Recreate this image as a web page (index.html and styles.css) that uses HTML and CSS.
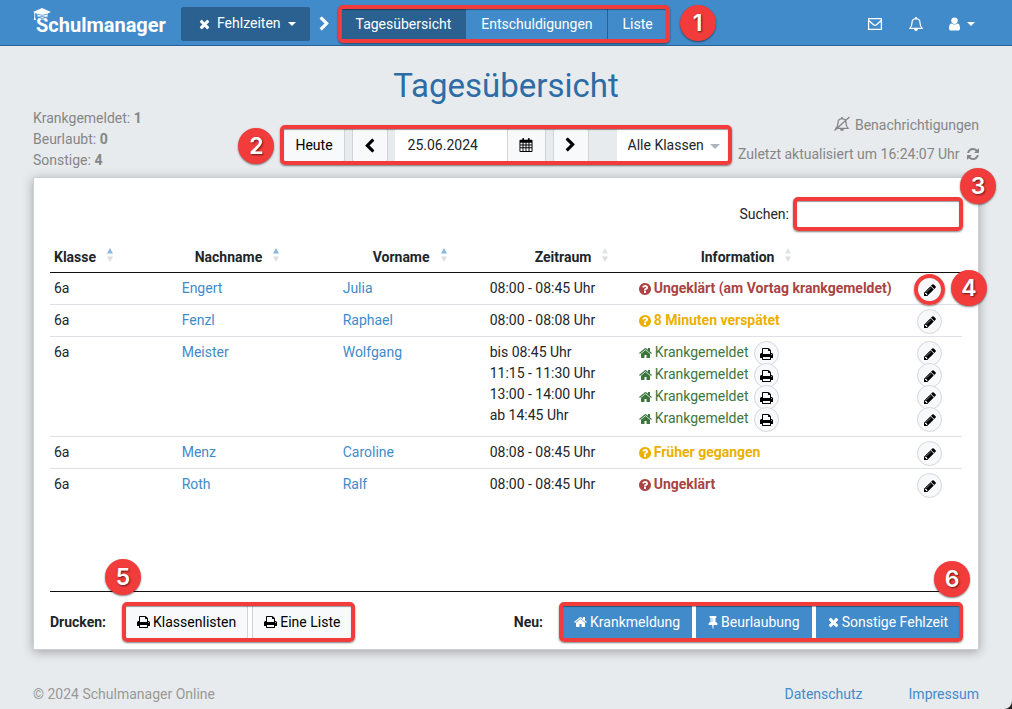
FILE: index.html
```html
<!DOCTYPE html>
<html lang="de">
<head>
<meta charset="utf-8">
<title>Tagesübersicht – Schulmanager</title>
<link rel="stylesheet" href="styles.css">
</head>
<body>
<svg class="sprite" aria-hidden="true">
  <symbol id="times" viewBox="192 0 1408 1792"><path d="M1490 1322q0 40-28 68l-136 136q-28 28-68 28t-68-28l-294-294-294 294q-28 28-68 28t-68-28l-136-136q-28-28-28-68t28-68l294-294-294-294q-28-28-28-68t28-68l136-136q28-28 68-28t68 28l294 294 294-294q28-28 68-28t68 28l136 136q28 28 28 68t-28 68l-294 294 294 294q28 28 28 68z"/></symbol>
  <symbol id="home" viewBox="64 0 1664 1792"><path d="M1472 992v480q0 26-19 45t-45 19h-384v-384h-256v384h-384q-26 0-45-19t-19-45v-480q0-1 .5-3t.5-3l575-474 575 474q1 2 1 6zm223-69l-62 74q-8 9-21 11h-3q-13 0-21-7l-692-577-692 577q-12 8-24 7-13-2-21-11l-62-74q-8-10-7-23.500t11-21.500l719-599q32-26 76-26t76 26l244 204v-195q0-14 9-23t23-9h192q14 0 23 9t9 23v408l219 182q10 8 11 21.500t-7 23.500z"/></symbol>
  <symbol id="question" viewBox="128 0 1536 1792"><path d="M1024 1376v-192q0-14-9-23t-23-9h-192q-14 0-23 9t-9 23v192q0 14 9 23t23 9h192q14 0 23-9t9-23zm256-672q0-88-55.500-163t-138.500-116-170-41q-243 0-371 213-15 24 8 42l132 100q7 6 19 6 16 0 25-12 53-68 86-92 34-24 86-24 48 0 85.500 26t37.500 59q0 38-20 61t-68 45q-63 28-115.500 86.500t-52.500 125.500v36q0 14 9 23t23 9h192q14 0 23-9t9-23q0-19 21.500-49.500t54.500-49.500q32-18 49-28.500t46-35 44.500-48 28-60.500 12.500-81zm384 192q0 209-103 385.500t-279.500 279.500-385.500 103-385.500-103-279.500-279.500-103-385.500 103-385.500 279.500-279.500 385.500-103 385.500 103 279.500 279.500 103 385.500z"/></symbol>
  <symbol id="pencil" viewBox="128 0 1536 1792"><path d="M491 1536l91-91-235-235-91 91v107h128v128h107zm523-928q0-22-22-22-10 0-17 7l-542 542q-7 7-7 17 0 22 22 22 10 0 17-7l542-542q7-7 7-17zm-54-192l416 416-832 832h-416v-416zm683 96q0 53-37 90l-166 166-416-416 166-165q36-38 90-38 53 0 91 38l235 234q37 39 37 91z"/></symbol>
  <symbol id="print" viewBox="64 0 1664 1792"><path d="M448 1536h896v-256h-896v256zm0-640h896v-384h-160q-40 0-68-28t-28-68v-160h-640v640zm1152 64q0-26-19-45t-45-19-45 19-19 45 19 45 45 19 45-19 19-45zm128 0v416q0 13-9.500 22.500t-22.500 9.500h-224v160q0 40-28 68t-68 28h-960q-40 0-68-28t-28-68v-160h-224q-13 0-22.500-9.500t-9.500-22.500v-416q0-79 56.500-135.500t135.500-56.500h64v-544q0-40 28-68t68-28h672q40 0 88 20t76 48l152 152q28 28 48 76t20 88v256h64q79 0 135.500 56.500t56.500 135.500z"/></symbol>
  <symbol id="refresh" viewBox="128 0 1536 1792"><path d="M1639 1056q0 5-1 7-64 268-268 434.500t-478 166.500q-146 0-282.500-55t-243.500-157l-129 129q-19 19-45 19t-45-19-19-45v-448q0-26 19-45t45-19h448q26 0 45 19t19 45-19 45l-137 137q71 66 161 102t187 36q134 0 250-65t186-179q11-17 53-117 8-23 30-23h192q13 0 22.500 9.500t9.500 22.500zm25-800v448q0 26-19 45t-45 19h-448q-26 0-45-19t-19-45 19-45l138-138q-148-137-349-137-134 0-250 65t-186 179q-11 17-53 117-8 23-30 23h-199q-13 0-22.500-9.500t-9.500-22.500v-7q65-268 270-434.500t480-166.500q146 0 284 55.500t245 156.500l130-129q19-19 45-19t45 19 19 45z"/></symbol>
  <symbol id="tack" viewBox="320 0 1152 1792"><path d="M800 864v-448q0-14-9-23t-23-9-23 9-9 23v448q0 14 9 23t23 9 23-9 9-23zm672 352q0 26-19 45t-45 19h-429l-51 483q-2 12-10.500 20.500t-20.500 8.500h-1q-27 0-32-27l-76-485h-404q-26 0-45-19t-19-45q0-123 78.500-221.500t177.500-98.500v-512q-52 0-90-38t-38-90 38-90 90-38h640q52 0 90 38t38 90-38 90-90 38v512q99 0 177.500 98.500t78.500 221.500z"/></symbol>
  <symbol id="chevron" viewBox="256 0 1280 1792"><path d="M1363 877l-742 742q-19 19-45 19t-45-19l-166-166q-19-19-19-45t19-45l531-531-531-531q-19-19-19-45t19-45l166-166q19-19 45-19t45 19l742 742q19 19 19 45t-19 45z"/></symbol>
  <symbol id="user" viewBox="256 0 1280 1792"><path d="M1536 1399q0 109-62.500 187t-150.500 78h-854q-88 0-150.500-78t-62.500-187q0-85 8.500-160.500t31.500-152 58.500-131 94-89 134.500-34.500q131 128 313 128t313-128q76 0 134.500 34.500t94 89 58.500 131 31.500 152 8.500 160.500zm-256-887q0 159-112.500 271.500t-271.500 112.500-271.500-112.500-112.500-271.500 112.500-271.500 271.500-112.500 271.500 112.500 112.500 271.500z"/></symbol>
  <symbol id="envelope" viewBox="0 0 16 14"><path d="M1.600 1.600h12.800v10.800H1.600zM1.800 3.400l4.700 4.300q1.500 1.200 3 0l4.700-4.300" fill="none" stroke="currentColor" stroke-width="1.300" stroke-linejoin="round"/></symbol>
  <symbol id="bell" viewBox="0 0 16 16"><path d="M1.700 12.400Q4 10.600 4 6.700q0-3.900 4-4.100 4 .2 4 4.100 0 3.900 2.300 5.700z" fill="none" stroke="currentColor" stroke-width="1.200" stroke-linejoin="round"/><path d="M7.200 1h1.600v2H7.200zM6 13h4q-.2 2-2 2t-2-2z"/></symbol>
  <symbol id="bell-slash" viewBox="0 0 18 16"><path d="M2.700 12.400Q5 10.600 5 6.700q0-3.900 4-4.100 4 .2 4 4.100 0 3.900 2.300 5.700zM1.500 14.500L16.500 1" fill="none" stroke="currentColor" stroke-width="1.300" stroke-linejoin="round"/><path d="M8.200 1h1.600v2H8.200zM7 13h4q-.2 2-2 2t-2-2z"/></symbol>
  <symbol id="calendar" viewBox="0 0 14 15"><path fill-rule="evenodd" d="M1 2h2V1q0-1 1-1t1 1v1h4V1q0-1 1-1t1 1v1h2q1 0 1 1v11q0 1-1 1H1q-1 0-1-1V3q0-1 1-1zM1 5v2h2.300V5zm3.300 0v2h2.200V5zm3.200 0v2h2.200V5zm3.200 0v2H13V5zM1 8v2h2.300V8zm3.300 0v2h2.200V8zm3.200 0v2h2.200V8zm3.200 0v2H13V8zM1 11v3h2.300v-3zm3.300 0v3h2.200v-3zm3.200 0v3h2.200v-3zm3.200 0v3H13v-3z"/></symbol>
  <symbol id="caret" viewBox="0 0 8 4"><path d="M0 0h8L4 4z"/></symbol>
  <symbol id="sort" viewBox="0 0 6 14"><path class="sort-up" d="M0 5.500h6L3 0z"/><path class="sort-down" d="M0 8.500h6L3 14z"/></symbol>
</svg>

<header class="navbar">
  <a class="brand" href="#">
    <svg class="brand-cap" viewBox="0 0 18 15"><path d="M9 0l9 4-3.500 1.500V9.500Q9 7.500 4.500 9V6L2.200 5v4.500l.8 2.500H.7l.6-2.500V4.500L0 4z"/><path d="M4.500 9q4.500 2.800 10 0" fill="none" stroke="#428bca"/><path d="M5 6.300q4 2 9 0" fill="none" stroke="#428bca" stroke-width=".8"/></svg>
    <span>Schulmanager</span>
  </a>
  <button class="btn btn-dark" type="button"><svg class="icon w11"><use href="#times"/></svg><span>Fehlzeiten</span><svg class="caret"><use href="#caret"/></svg></button>
  <svg class="icon w11 tall crumb"><use href="#chevron"/></svg>
  <nav class="tabs marked">
    <a class="tab active" href="#">Tagesübersicht</a>
    <a class="tab" href="#">Entschuldigungen</a>
    <a class="tab" href="#">Liste</a>
    <span class="badge badge-1">1</span>
  </nav>
  <div class="tools">
    <button class="tool" type="button" aria-label="Nachrichten"><svg class="icon w16"><use href="#envelope"/></svg></button>
    <button class="tool" type="button" aria-label="Mitteilungen"><svg class="icon w16 tall"><use href="#bell"/></svg></button>
    <button class="tool" type="button" aria-label="Konto"><svg class="icon w11 tall"><use href="#user"/></svg><svg class="caret"><use href="#caret"/></svg></button>
  </div>
</header>

<main class="page">
  <h1>Tagesübersicht</h1>
  <section class="status">
    <div class="summary">
      <div>Krankgemeldet: <b>1</b></div>
      <div>Beurlaubt: <b>0</b></div>
      <div>Sonstige: <b>4</b></div>
    </div>
    <div class="controls marked">
      <button class="btn btn-light" type="button">Heute</button>
      <button class="btn btn-light narrow" type="button" aria-label="Zurück"><svg class="icon w11 tall flip"><use href="#chevron"/></svg></button>
      <div class="date">
        <input type="text" value="25.06.2024" aria-label="Datum">
        <button class="btn btn-light" type="button" aria-label="Kalender"><svg class="icon w14"><use href="#calendar"/></svg></button>
      </div>
      <button class="btn btn-light narrow" type="button" aria-label="Weiter"><svg class="icon w11 tall"><use href="#chevron"/></svg></button>
      <div class="classes">
        <select aria-label="Klasse"><option>Alle Klassen</option></select>
        <svg class="select-caret"><use href="#caret"/></svg>
      </div>
      <span class="badge badge-2">2</span>
    </div>
    <div class="updates">
      <div><svg class="icon w18 tall"><use href="#bell-slash"/></svg> Benachrichtigungen</div>
      <div>Zuletzt aktualisiert um 16:24:07 Uhr <svg class="icon w12 reload"><use href="#refresh"/></svg></div>
    </div>
  </section>

  <section class="card">
    <div class="search">
      <label for="search">Suchen:</label>
      <div class="search-box marked"><input id="search" type="text"><span class="badge badge-3">3</span></div>
    </div>
    <div class="table-area">
      <table>
        <colgroup><col class="c-class"><col class="c-last"><col class="c-first"><col class="c-time"><col class="c-info"><col class="c-edit"></colgroup>
        <thead>
          <tr>
            <th class="sorted">Klasse<svg class="sort"><use href="#sort"/></svg></th>
            <th class="sorted h-last">Nachname<svg class="sort"><use href="#sort"/></svg></th>
            <th class="sorted h-first">Vorname<svg class="sort"><use href="#sort"/></svg></th>
            <th class="h-time">Zeitraum<svg class="sort"><use href="#sort"/></svg></th>
            <th class="h-info">Information<svg class="sort"><use href="#sort"/></svg></th>
            <th></th>
          </tr>
        </thead>
        <tbody>
          <tr>
            <td>6a</td><td><a href="#">Engert</a></td><td><a href="#">Julia</a></td><td>08:00 - 08:45 Uhr</td>
            <td><div class="line red"><svg class="icon w12"><use href="#question"/></svg>Ungeklärt (am Vortag krankgemeldet)</div></td>
            <td><div class="line"><span class="ring"><button class="round" type="button" aria-label="Bearbeiten"><svg class="icon w12"><use href="#pencil"/></svg></button><span class="badge badge-4">4</span></span></div></td>
          </tr>
          <tr>
            <td>6a</td><td><a href="#">Fenzl</a></td><td><a href="#">Raphael</a></td><td>08:00 - 08:08 Uhr</td>
            <td><div class="line yellow"><svg class="icon w12"><use href="#question"/></svg>8 Minuten verspätet</div></td>
            <td><div class="line"><button class="round" type="button" aria-label="Bearbeiten"><svg class="icon w12"><use href="#pencil"/></svg></button></div></td>
          </tr>
          <tr>
            <td>6a</td><td><a href="#">Meister</a></td><td><a href="#">Wolfgang</a></td>
            <td>bis 08:45 Uhr<br>11:15 - 11:30 Uhr<br>13:00 - 14:00 Uhr<br>ab 14:45 Uhr</td>
            <td><div class="stack">
              <div class="line green"><svg class="icon w13"><use href="#home"/></svg>Krankgemeldet<button class="round" type="button" aria-label="Drucken"><svg class="icon w13"><use href="#print"/></svg></button></div>
              <div class="line green"><svg class="icon w13"><use href="#home"/></svg>Krankgemeldet<button class="round" type="button" aria-label="Drucken"><svg class="icon w13"><use href="#print"/></svg></button></div>
              <div class="line green"><svg class="icon w13"><use href="#home"/></svg>Krankgemeldet<button class="round" type="button" aria-label="Drucken"><svg class="icon w13"><use href="#print"/></svg></button></div>
              <div class="line green"><svg class="icon w13"><use href="#home"/></svg>Krankgemeldet<button class="round" type="button" aria-label="Drucken"><svg class="icon w13"><use href="#print"/></svg></button></div>
            </div></td>
            <td><div class="stack">
              <div class="line"><button class="round" type="button" aria-label="Bearbeiten"><svg class="icon w12"><use href="#pencil"/></svg></button></div>
              <div class="line"><button class="round" type="button" aria-label="Bearbeiten"><svg class="icon w12"><use href="#pencil"/></svg></button></div>
              <div class="line"><button class="round" type="button" aria-label="Bearbeiten"><svg class="icon w12"><use href="#pencil"/></svg></button></div>
              <div class="line"><button class="round" type="button" aria-label="Bearbeiten"><svg class="icon w12"><use href="#pencil"/></svg></button></div>
            </div></td>
          </tr>
          <tr>
            <td>6a</td><td><a href="#">Menz</a></td><td><a href="#">Caroline</a></td><td>08:08 - 08:45 Uhr</td>
            <td><div class="line yellow"><svg class="icon w12"><use href="#question"/></svg>Früher gegangen</div></td>
            <td><div class="line"><button class="round" type="button" aria-label="Bearbeiten"><svg class="icon w12"><use href="#pencil"/></svg></button></div></td>
          </tr>
          <tr>
            <td>6a</td><td><a href="#">Roth</a></td><td><a href="#">Ralf</a></td><td>08:00 - 08:45 Uhr</td>
            <td><div class="line red"><svg class="icon w12"><use href="#question"/></svg>Ungeklärt</div></td>
            <td><div class="line"><button class="round" type="button" aria-label="Bearbeiten"><svg class="icon w12"><use href="#pencil"/></svg></button></div></td>
          </tr>
        </tbody>
      </table>
    </div>
    <div class="actions">
      <b>Drucken:</b>
      <div class="group marked">
        <button class="btn btn-light" type="button"><svg class="icon w13"><use href="#print"/></svg>Klassenlisten</button>
        <button class="btn btn-light" type="button"><svg class="icon w13"><use href="#print"/></svg>Eine Liste</button>
        <span class="badge badge-5">5</span>
      </div>
      <b class="new">Neu:</b>
      <div class="group marked">
        <button class="btn btn-blue" type="button"><svg class="icon w13"><use href="#home"/></svg>Krankmeldung</button>
        <button class="btn btn-blue" type="button"><svg class="icon w10"><use href="#tack"/></svg>Beurlaubung</button>
        <button class="btn btn-blue" type="button"><svg class="icon w11"><use href="#times"/></svg>Sonstige Fehlzeit</button>
        <span class="badge badge-6">6</span>
      </div>
    </div>
  </section>
</main>

<footer class="footer">
  <span>© 2024 Schulmanager Online</span>
  <a class="privacy" href="#">Datenschutz</a>
  <a href="#">Impressum</a>
</footer>
</body>
</html>
```

FILE: styles.css
```css
* { box-sizing: border-box; }
html { background: #222; }
body {
  margin: 0;
  min-height: 100vh;
  display: flex;
  flex-direction: column;
  background: #e7ebee;
  border-bottom-right-radius: 8px;
  color: #212529;
  font: 14px/21px Roboto, "Liberation Sans", sans-serif;
}
a { color: #428bca; text-decoration: none; }
button, input, select { font: inherit; color: #000; margin: 0; }
b, th { font-weight: 700; }
.sprite { position: absolute; width: 0; height: 0; }

.icon { height: 14px; fill: currentColor; flex: none; vertical-align: -2px; }
.w10 { width: 10px; }
.w11 { width: 11px; }
.w12 { width: 12px; }
.w13 { width: 13px; }
.w14 { width: 14px; }
.w16 { width: 16px; }
.w18 { width: 18px; }
.tall { height: 16px; }
.flip { transform: rotate(180deg); }
.caret { width: 8px; height: 4px; fill: currentColor; }

/* Red markers and their numbers */
.marked { position: relative; }
.marked::after {
  content: "";
  position: absolute;
  inset: -3px;
  border: 4px solid #f23c3c;
  border-radius: 5px;
  box-shadow: 0 1px 2px rgba(0, 0, 0, .5), inset 0 1px 1px rgba(0, 0, 0, .4);
  pointer-events: none;
}
.badge {
  position: absolute;
  z-index: 2;
  width: 36px;
  height: 36px;
  border-radius: 50%;
  background: #f23c3c;
  box-shadow: 0 1px 2px rgba(0, 0, 0, .5);
  color: #fff;
  font: 600 23px/36px Inter, sans-serif;
  text-align: center;
  text-shadow: 1px 1px 2px rgba(0, 0, 0, .6);
}
.badge-1 { top: -3px; right: -49px; }
.badge-2 { top: 0; left: -45px; }
.badge-3 { top: -32px; right: -36px; }
.badge-4 { top: -5px; left: 36px; }
.badge-5 { top: -46px; left: -20px; }
.badge-6 { top: -44px; right: -10px; }

.navbar {
  display: flex;
  align-items: center;
  height: 46px;
  padding: 2px 33px 0;
  background: #428bca;
  border-bottom: 1px solid #2a6496;
  color: #fff;
}
.brand {
  position: relative;
  width: 148px;
  padding: 3px 0 0 3px;
  color: #fff;
  font-size: 20px;
  font-weight: 700;
}
.brand-cap { position: absolute; left: 0; top: -4px; width: 18px; height: 15px; fill: #fff; }
.btn {
  display: flex;
  align-items: center;
  justify-content: center;
  gap: 3px;
  height: 34px;
  padding: 0 11px;
  border: 1px solid #ced4da;
  border-radius: 2px;
}
.btn-dark { gap: 7px; padding: 0 13px 0 17px; background: #2a6190; border-color: #2a6190; color: #fff; }
.btn-light { background: #f8f9fb; }
.btn-blue { background: #428bca; border-color: #428bca; color: #fff; }
.crumb { margin: 0 10px 0 9px; }
.tabs { display: flex; height: 34px; border: 1px solid #2a6190; }
.tab { padding: 6px 14px 6px 15px; color: #fff; border-left: 1px solid #2a6190; }
.tab:first-child { border-left: 0; }
.tab.active { background: #2a6190; }
.tools { display: flex; gap: 25px; margin-left: auto; padding-right: 4px; }
.tool { display: flex; align-items: center; gap: 7px; padding: 0; border: 0; background: none; color: #fff; }

.page { padding: 0 33px; }
h1 { margin: 17px 0 0; color: #2e6ca6; font-size: 33px; font-weight: 400; line-height: 45px; text-align: center; }
.status { display: grid; grid-template-columns: 1fr auto 1fr; color: #868686; }
.summary { height: 69px; }
.controls { display: flex; margin-top: 20px; height: 34px; background: #e7ebee; }
.narrow { width: 36px; margin-left: 7px; padding: 0; }
.date { display: flex; margin-left: 7px; }
.date input { width: 112px; padding: 0 13px; border: 0; background: #fff; color: #212529; }
.date .btn { width: 39px; padding: 0; border-radius: 0; }
.classes { position: relative; margin-left: 28px; }
.classes select { appearance: none; width: 112px; height: 34px; padding: 0 0 0 11px; border: 0; border-radius: 0; background: #fff; color: #212529; }
.select-caret { position: absolute; right: 9px; top: 16px; width: 10px; height: 5px; fill: #adb5bd; pointer-events: none; }
.updates { display: grid; gap: 8px; align-content: start; padding-top: 7px; text-align: right; white-space: nowrap; }
.reload { margin-left: 4px; }

.card { padding: 22px 17px 10px; background: #fff; border: 1px solid #ccd0d3; box-shadow: 0 2px 10px rgba(0, 0, 0, .3); }
.search { display: flex; justify-content: flex-end; align-items: center; gap: 7px; padding-right: 1px; }
.search-box input { display: block; width: 164px; height: 28px; border: 0; background: #fff; }
.table-area { min-height: 350px; margin-top: 14px; border-bottom: 1px solid #111; }
.card .table-area, .card .actions { margin-left: -1px; margin-right: -1px; }
table { width: 100%; border-collapse: separate; border-spacing: 0; table-layout: fixed; }
.c-class { width: 14%; }
.c-last { width: 161px; }
.c-first { width: 147px; }
.c-time { width: 149px; }
.c-edit { width: 51px; }
th { height: 31px; padding: 4px; border-bottom: 1px solid #111; text-align: left; white-space: nowrap; }
.h-last { padding-left: 17px; }
.h-first { padding-left: 34px; }
.h-time { padding-left: 49px; }
.h-info { padding-left: 66px; }
.sort { width: 6px; height: 14px; margin-left: 11px; vertical-align: 0; color: #e0e2e4; }
.sorted .sort { color: #8ab8e0; }
.sort-up { fill: currentColor; }
.sort-down { fill: #dcdee0; }
td { padding: 5px 4px; border-bottom: 1px solid #dee2e6; vertical-align: top; }
tbody tr:last-child td { border-bottom: 0; }
.line { display: flex; align-items: center; gap: 3px; height: 21px; white-space: nowrap; }
.line .round { margin: 2px 0 0 2px; }
.stack { display: grid; gap: 1px; padding-bottom: 2px; }
.red { color: #a94442; font-weight: 700; }
.yellow { color: #ecb000; font-weight: 700; }
.green { color: #3c763d; }
.round {
  display: flex;
  align-items: center;
  justify-content: center;
  flex: none;
  width: 25px;
  height: 25px;
  padding: 0;
  border: 1px solid #d3d8de;
  border-radius: 50%;
  background: #f8f9fb;
}
.ring { position: relative; }
.ring::after {
  content: "";
  position: absolute;
  inset: -1px -3px -3px -1px;
  border: 4px solid #f23c3c;
  border-radius: 50%;
  box-shadow: 0 1px 2px rgba(0, 0, 0, .5);
  pointer-events: none;
}
.actions { display: flex; align-items: center; padding-top: 13px; padding-right: 2px; }
.group { display: flex; gap: 4px; margin-left: 19px; }
.new { margin-left: auto; }

.footer { display: flex; margin-top: auto; padding: 0 33px 4px; color: #999; }
.privacy { margin: 0 46px 0 auto; }
```
